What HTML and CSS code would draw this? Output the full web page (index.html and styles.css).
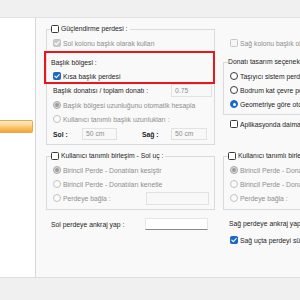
FILE: index.html
```html
<!DOCTYPE html>
<html lang="tr">
<head>
<meta charset="utf-8">
<title>Perde ayarları</title>
<link rel="stylesheet" href="styles.css">
</head>
<body>
<div class="window">
  <div class="topbar"></div>
  <div class="main">
    <aside class="side"><div class="side-item"></div></aside>
    <div class="content">
      <div class="col col-left">
        <fieldset class="grp grp-a">
          <legend><span class="cb"></span><span>Güçlendirme perdesi :</span></legend>
          <div class="row dis"><span class="cb cb-dis-on"><svg viewBox="0 0 8 8"><polyline points="1.8,4.1 3.3,5.6 6.2,2.6"/></svg></span>Sol kolonu başlık olarak kullan</div>
          <div class="row row-title">Başlık bölgesi :</div>
          <div class="row"><span class="cb cb-on"><svg viewBox="0 0 8 8"><polyline points="1.8,4.1 3.3,5.6 6.2,2.6"/></svg></span>Kısa başlık perdesi</div>
          <div class="row">Başlık donatısı / toplam donatı :<span class="inp inp-ratio">0.75</span></div>
          <div class="row row-sp dis"><span class="rb rb-dis-on"></span>Başlık bölgesi uzunluğunu otomatik hesapla</div>
          <div class="row dis"><span class="rb rb-dis"></span>Kullanıcı tanımlı başlık uzunlukları :</div>
          <div class="row row-sp lens"><b>Sol :</b><span class="inp">50 cm</span><b class="lab2">Sağ :</b><span class="inp">50 cm</span></div>
        </fieldset>
        <div class="highlight"></div>
        <fieldset class="grp grp-b">
          <legend><span class="cb"></span><span>Kullanıcı tanımlı birleşim - Sol uç :</span></legend>
          <div class="row dis"><span class="rb rb-dis-on"></span>Birincil Perde - Donatıları kesiştir</div>
          <div class="row dis"><span class="rb rb-dis"></span>Birincil Perde - Donatıları kenetle</div>
          <div class="row dis"><span class="rb rb-dis"></span>Perdeye bağla :<span class="inp inp-long"></span></div>
        </fieldset>
        <div class="row row-anchor">Sol perdeye ankraj yap :<span class="inp inp-long inp-edit"></span></div>
      </div>
      <div class="col col-right">
        <div class="row row-out dis"><span class="cb cb-dis"></span>Sağ kolonu başlık olarak kullan</div>
        <fieldset class="grp grp-c">
          <legend><span>Donatı tasarım seçenekleri</span></legend>
          <div class="row"><span class="rb"></span>Taşıyıcı sistem perdelerini kullan</div>
          <div class="row"><span class="rb"></span>Bodrum kat çevre perdelerini kullan</div>
          <div class="row"><span class="rb rb-sel"></span>Geometriye göre otomatik belirle</div>
        </fieldset>
        <div class="row row-out row-app"><span class="cb"></span>Aplikasyonda daima donatıyı göster</div>
        <fieldset class="grp grp-d">
          <legend><span class="cb"></span><span>Kullanıcı tanımlı birleşim - Sağ uç :</span></legend>
          <div class="row dis"><span class="rb rb-dis-on"></span>Birincil Perde - Donatıları kesiştir</div>
          <div class="row dis"><span class="rb rb-dis"></span>Birincil Perde - Donatıları kenetle</div>
          <div class="row dis"><span class="rb rb-dis"></span>Perdeye bağla :</div>
        </fieldset>
        <div class="row row-ranchor">Sağ perdeye ankraj yap :</div>
        <div class="row row-out row-last"><span class="cb cb-on"><svg viewBox="0 0 8 8"><polyline points="1.8,4.1 3.3,5.6 6.2,2.6"/></svg></span>Sağ uçta perdeyi sürekli kabul et</div>
      </div>
    </div>
  </div>
  <div class="bottombar"></div>
</div>
</body>
</html>
```
FILE: styles.css
```css
* { box-sizing: border-box; }
html, body { margin: 0; padding: 0; }
body {
  width: 300px;
  height: 300px;
  overflow: hidden;
  font-family: "Liberation Sans", Arial, sans-serif;
  font-size: 6.8px;
  color: #1e1e1e;
  background: #f0f0f0;
}
.window { width: 300px; height: 300px; display: flex; flex-direction: column; }
.topbar { height: 18px; flex: none; background: #f0f0f0; border-bottom: 1px solid #e2e2e2; }
.main { height: 259px; flex: none; display: flex; background: #f9f9f9; }
.bottombar { flex: 1; background: #f0f0f0; border-top: 1px solid #dedede; }

.side {
  width: 36px;
  flex: none;
  background: #ffffff;
  border-right: 1px solid #d6d6d6;
  padding-top: 102px;
}
.side-item {
  width: 33px;
  height: 13px;
  background: linear-gradient(#ffedc8 0%, #fdd896 35%, #f9bf5e 65%, #f3a53c 100%);
  border: 1px solid #eaa84a;
  border-left: none;
  border-radius: 0 2px 2px 0;
}

.content {
  flex: 1;
  overflow: hidden;
  display: grid;
  grid-template-columns: 169px 180px;
  column-gap: 8px;
  padding-left: 10px;
  align-items: start;
}
.col { display: flex; flex-direction: column; }
.col-left { position: relative; padding-top: 7px; }
.col-right { padding-top: 18px; }

.grp {
  margin: 0;
  min-width: 0;
  border: 1px solid #dadada;
  padding: 0 2px 3px 4px;
}
.grp legend {
  padding: 0 2px 0 0;
  height: 8px;
  display: flex;
  align-items: center;
  gap: 2px;
  line-height: 8px;
  white-space: nowrap;
}
.grp-b { margin-top: 7px; padding-bottom: 4px; padding-right: 5px; }
.grp-c { margin-top: 8px; width: 180px; }
.grp-d { margin-top: 21px; width: 180px; padding-bottom: 4px; }

.row {
  height: 14px;
  display: flex;
  align-items: center;
  gap: 2px;
  padding-left: 2px;
  white-space: nowrap;
}
.grp legend + .row { margin-top: 3px; }
.row-title { margin-top: 5px; padding-left: 0; }
.row-sp { margin-top: 1px; }
.dis { color: #8e8e8e; }
.row-anchor { margin-top: 7px; padding-left: 5px; padding-right: 7px; }
.row-out { padding-left: 7px; }
.row-app { margin-top: 2px; }
.row-ranchor { margin-top: 6px; padding-left: 6px; }
.row-last { margin-top: 3px; }

.lens {
  display: grid;
  grid-template-columns: 29px 35px 54px 36px;
  gap: 0;
  color: #1e1e1e;
}
.lens b { font-weight: bold; }
.lab2 { padding-left: 25px; }

.cb {
  width: 8px;
  height: 8px;
  flex: none;
  display: inline-block;
  border: 1px solid #3a3a3a;
  border-radius: 1.5px;
  background: #ffffff;
  position: relative;
}
.cb svg { position: absolute; left: -1px; top: -1px; width: 8px; height: 8px; }
.cb polyline { fill: none; stroke: #ffffff; stroke-width: 1.1; stroke-linecap: round; stroke-linejoin: round; }
.cb-on { background: #1b69c6; border-color: #1b69c6; }
.cb-dis-on { background: #c9c9c9; border-color: #c4c4c4; }
.cb-dis { background: #f6f6f6; border-color: #c6c6c6; }

.rb {
  width: 8px;
  height: 8px;
  flex: none;
  display: inline-block;
  border: 1px solid #3a3a3a;
  border-radius: 50%;
  background: #ffffff;
  position: relative;
}
.rb-dis { border-color: #c2c2c2; background: #fbfbfb; }
.rb-dis-on { border-color: #a9a9a9; background: #dcdcdc; }
.rb-dis-on::after {
  content: "";
  position: absolute;
  left: 1px; top: 1px;
  width: 4px; height: 4px;
  border-radius: 50%;
  background: #9c9c9c;
}
.rb-sel { background: #1b69c6; border-color: #1b69c6; }
.rb-sel::after {
  content: "";
  position: absolute;
  left: 1.5px; top: 1.5px;
  width: 3px; height: 3px;
  border-radius: 50%;
  background: #ffffff;
}

.inp {
  display: inline-block;
  height: 12px;
  border: 1px solid #e2e2e2;
  background: #f8f8f8;
  color: #8e8e8e;
  padding-left: 3px;
  line-height: 10px;
}
.inp-ratio { width: 41px; height: 13px; margin-left: auto; line-height: 11px; }
.inp-long { width: 63px; height: 13px; margin-left: auto; }
.inp-edit { height: 12px; background: #ffffff; border-color: #e6e6e6; border-bottom-color: #8a8a8a; }

.highlight {
  position: absolute;
  left: -2px;
  top: 33px;
  width: 171px;
  height: 33px;
  border: 2px solid #e8171b;
  pointer-events: none;
}
```
